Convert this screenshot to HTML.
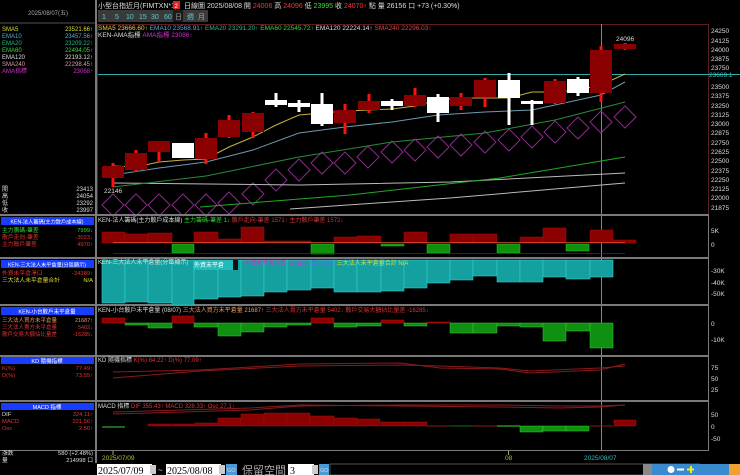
<!DOCTYPE html>
<html><head><meta charset="utf-8"><style>
html,body{margin:0;padding:0;background:#000;width:740px;height:475px;overflow:hidden}
svg{display:block;font-family:"Liberation Sans","Noto Sans CJK TC",sans-serif;font-size:7px}
</style></head><body>
<svg width="740" height="475" viewBox="0 0 740 475" xmlns="http://www.w3.org/2000/svg">
<rect width="740" height="475" fill="#000"/>
<rect x="95" y="0" width="2" height="463" fill="#7a7a7a"/>
<text x="48" y="15" fill="#aaa" text-anchor="middle" font-size="6">2025/08/07(五)</text>
<line x1="0" y1="23" x2="95" y2="23" stroke="#555"/>
<text x="98" y="8" fill="#ddd" font-size="7">小型台指近月(FIMTXN*1)</text>
<rect x="173" y="1" width="7" height="8" fill="#d22"/><text x="174.5" y="8" fill="#fff" font-size="6">2</text>
<text x="184" y="8" fill="#ddd" font-size="7">日線圖  2025/08/08  開 <tspan fill="#f33">24006</tspan> 高 <tspan fill="#f33">24096</tspan> 低 <tspan fill="#3d3">23995</tspan> 收 <tspan fill="#f33">24070</tspan><tspan fill="#f33">↑</tspan> 點  量 26156 口  +73 (+0.30%)</text>
<rect x="98" y="10" width="110" height="12" fill="#3a3a3a"/>
<g fill="#5cc" font-size="7">
<text x="102" y="19">1</text><text x="115" y="19">5</text><text x="126" y="19">10</text><text x="139" y="19">15</text><text x="151" y="19">30</text><text x="164" y="19">60</text>
</g>
<rect x="173" y="10" width="10" height="12" fill="#1c1c1c"/><text x="175" y="19" fill="#999">日</text>
<text x="187" y="19" fill="#5cc">週</text><text x="198" y="19" fill="#5cc">月</text>
<rect x="97.5" y="24.5" width="611" height="190" fill="none" stroke="#5a2020"/>
<text x="98" y="30" font-size="6.5"><tspan fill="#dd3">SMA5 23666.60↑</tspan>  <tspan fill="#5ad">  EMA10 23568.91↑</tspan>  <tspan fill="#2b8">  EMA20 23291.20↑</tspan>  <tspan fill="#3d3">  EMA60 22545.72↑</tspan>  <tspan fill="#ddd">  EMA120 22224.14↑</tspan>  <tspan fill="#d44">  SMA240 22296.03↑</tspan></text>
<text x="98" y="37" font-size="6.5" fill="#ddd">KEN-AMA指標  <tspan fill="#c3c">      AMA指標 23086↑</tspan></text>
<line x1="98" y1="74.5" x2="740" y2="74.5" stroke="#3aa" stroke-width="1"/>
<line x1="601.5" y1="24" x2="601.5" y2="450" stroke="#3aa"/>
<g fill="#ddd" font-size="6.5">
<text x="711" y="33">24250</text><text x="711" y="43">24125</text><text x="711" y="52">24000</text><text x="711" y="61">23875</text><text x="711" y="70">23750</text>
<text x="711" y="89">23500</text><text x="711" y="98">23375</text><text x="711" y="108">23250</text><text x="711" y="117">23125</text><text x="711" y="126">23000</text><text x="711" y="135">22875</text><text x="711" y="145">22750</text><text x="711" y="154">22625</text><text x="711" y="163">22500</text><text x="711" y="173">22375</text><text x="711" y="182">22250</text><text x="711" y="191">22125</text><text x="711" y="200">22000</text><text x="711" y="210">21875</text>
</g>
<text x="709" y="77" fill="#3cc" font-size="6.5">23669.1</text>
<g fill="none" stroke="#8a2a8a" stroke-width="1">
<path d="M102,205l11,-11l11,11l-11,11zM125,205l11,-11l11,11l-11,11zM148,205l11,-11l11,11l-11,11zM172,205l11,-11l11,11l-11,11zM195,205l11,-11l11,11l-11,11zM218,203l11,-11l11,11l-11,11zM242,194l11,-11l11,11l-11,11zM265,180l11,-11l11,11l-11,11zM288,170l11,-11l11,11l-11,11zM311,163l11,-11l11,11l-11,11zM334,163l11,-11l11,11l-11,11zM357,157l11,-11l11,11l-11,11zM381,152l11,-11l11,11l-11,11zM404,150l11,-11l11,11l-11,11zM427,147l11,-11l11,11l-11,11zM450,145l11,-11l11,11l-11,11zM474,142l11,-11l11,11l-11,11zM498,140l11,-11l11,11l-11,11zM521,137l11,-11l11,11l-11,11zM544,132l11,-11l11,11l-11,11zM567,128l11,-11l11,11l-11,11zM590,122l11,-11l11,11l-11,11zM614,117l11,-11l11,11l-11,11z"/>
</g>
<g fill="none" stroke-width="1">
<polyline stroke="#bbb" points="113,183 300,185 450,182 625,173"/>
<polyline stroke="#bbb" points="290,209 450,198 625,183"/>
<polyline stroke="#2a2" points="200,207 350,195 500,178 625,157"/>
<polyline stroke="#2a8a3a" points="113,187 206,176 299,157 392,142 485,133 555,120 625,102"/>
<polyline stroke="#6a9ab0" points="113,175 159,168 206,162 253,150 299,133 345,127 392,122 438,115 485,112 532,110 578,100 601,95 625,82"/>
<polyline stroke="#c8b040" points="113,166 136,167 159,162 183,160 206,159 229,147 253,137 276,125 299,115 322,113 345,111 369,110 392,109 415,106 438,100 461,98 485,98 509,98 532,92 555,92 578,90 601,85 625,74"/>
</g>
<g stroke-width="3">
<g stroke="#f11">
<line x1="113" y1="163" x2="113" y2="187"/><line x1="136" y1="150" x2="136" y2="172"/><line x1="159" y1="141" x2="159" y2="162"/><line x1="206" y1="133" x2="206" y2="164"/><line x1="229" y1="115" x2="229" y2="138"/><line x1="253" y1="112" x2="253" y2="138"/><line x1="345" y1="104" x2="345" y2="134"/><line x1="369" y1="94" x2="369" y2="113"/><line x1="415" y1="88" x2="415" y2="107"/><line x1="461" y1="93" x2="461" y2="110"/><line x1="485" y1="78" x2="485" y2="107"/><line x1="555" y1="79" x2="555" y2="104"/><line x1="601" y1="46" x2="601" y2="102"/><line x1="625" y1="43" x2="625" y2="50"/>
</g>
<g stroke="#fff">
<line x1="183" y1="143" x2="183" y2="158"/><line x1="276" y1="93" x2="276" y2="107"/><line x1="299" y1="100" x2="299" y2="112"/><line x1="322" y1="93" x2="322" y2="126"/><line x1="392" y1="99" x2="392" y2="110"/><line x1="438" y1="94" x2="438" y2="122"/><line x1="509" y1="73" x2="509" y2="125"/><line x1="532" y1="100" x2="532" y2="125"/><line x1="578" y1="77" x2="578" y2="96"/>
</g>
</g>
<g fill="#8b0000">
<rect x="102" y="166" width="22" height="12"/><rect x="125" y="153" width="22" height="17"/><rect x="148" y="141" width="22" height="11"/><rect x="195" y="138" width="22" height="21"/><rect x="218" y="120" width="22" height="17"/><rect x="242" y="113" width="22" height="19"/><rect x="334" y="110" width="22" height="13"/><rect x="358" y="101" width="22" height="9"/><rect x="404" y="95" width="22" height="11"/><rect x="450" y="97" width="22" height="9"/><rect x="474" y="80" width="22" height="17"/><rect x="544" y="81" width="22" height="22"/><rect x="590" y="50" width="22" height="43"/><rect x="614" y="44" width="22" height="5"/>
</g>
<g fill="#fff">
<rect x="172" y="143" width="22" height="15"/><rect x="265" y="100" width="22" height="5"/><rect x="288" y="103" width="22" height="4"/><rect x="311" y="104" width="22" height="20"/><rect x="381" y="101" width="22" height="5"/><rect x="427" y="97" width="22" height="16"/><rect x="498" y="80" width="22" height="18"/><rect x="521" y="101" width="22" height="3"/><rect x="567" y="79" width="22" height="14"/>
</g>
<text x="104" y="193" fill="#ddd" font-size="6.5">22146</text>
<text x="616" y="41" fill="#ddd" font-size="6.5">24096</text>

<g font-size="6">
<text x="2" y="31" fill="#dd3">SMA5</text><text x="93" y="31" fill="#dd3" text-anchor="end">23521.66↑</text>
<text x="2" y="38" fill="#5ad">EMA10</text><text x="93" y="38" fill="#5ad" text-anchor="end">23457.56↑</text>
<text x="2" y="45" fill="#2b8">EMA20</text><text x="93" y="45" fill="#2b8" text-anchor="end">23209.22↑</text>
<text x="2" y="52" fill="#3d3">EMA60</text><text x="93" y="52" fill="#3d3" text-anchor="end">22494.05↑</text>
<text x="2" y="59" fill="#ddd">EMA120</text><text x="93" y="59" fill="#ddd" text-anchor="end">22193.12↑</text>
<text x="2" y="66" fill="#d9a">SMA240</text><text x="93" y="66" fill="#d9a" text-anchor="end">22298.45↑</text>
<text x="2" y="73" fill="#c3c">AMA指標</text><text x="93" y="73" fill="#c3c" text-anchor="end">23068↑</text>
<g fill="#ddd"><text x="2" y="191">開</text><text x="93" y="191" text-anchor="end">23413</text><text x="2" y="198">高</text><text x="93" y="198" text-anchor="end">24054</text><text x="2" y="205">低</text><text x="93" y="205" text-anchor="end">23292</text><text x="2" y="212">收</text><text x="93" y="212" text-anchor="end">23997</text></g>
</g>

<g fill="#7a7a7a">
<rect x="0" y="214" width="709" height="2"/>
<rect x="0" y="257" width="709" height="2"/>
<rect x="0" y="304" width="709" height="2"/>
<rect x="0" y="355" width="709" height="2"/>
<rect x="0" y="400" width="709" height="2"/>
<rect x="0" y="450" width="709" height="1"/>
</g>
<rect x="708" y="214" width="1" height="237" fill="#7a7a7a"/>

<rect x="1" y="217" width="93" height="8" fill="#1a3cff"/>
<text x="47" y="223.5" fill="#fff" font-size="5.2" text-anchor="middle">KEN-法人籌碼(主力散戶成本線)</text>
<g font-size="5.8"><text x="2" y="232" fill="#3d3">主力籌碼-筆差</text><text x="93" y="232" fill="#3d3" text-anchor="end">7999↓</text>
<text x="2" y="239" fill="#d33">散戶走向-筆差</text><text x="93" y="239" fill="#d33" text-anchor="end">-3023↓</text>
<text x="2" y="246" fill="#d33">主力散戶筆差</text><text x="93" y="246" fill="#d33" text-anchor="end">4976↑</text></g>
<text x="98" y="222" fill="#ddd" font-size="6">KEN-法人籌碼(主力散戶成本線)   <tspan fill="#3d3">  主力籌碼-筆差 1↓</tspan>   <tspan fill="#d33">  散戶走向-筆差 1571↑</tspan>   <tspan fill="#d33">  主力散戶筆差 1572↓</tspan></text>
<g fill="#8b0000" stroke="#a01010" stroke-width=".5">
<rect x="102" y="232" width="23" height="11"/><rect x="125" y="234" width="23" height="9"/><rect x="148" y="233" width="24" height="10"/><rect x="194" y="232" width="24" height="11"/><rect x="218" y="239" width="23" height="4"/><rect x="241" y="227" width="23" height="16"/><rect x="264" y="241" width="23" height="2"/><rect x="287" y="241" width="24" height="2"/><rect x="334" y="237" width="23" height="6"/><rect x="357" y="236" width="24" height="7"/><rect x="404" y="232" width="23" height="11"/><rect x="450" y="234" width="23" height="9"/><rect x="473" y="234" width="24" height="9"/><rect x="520" y="237" width="23" height="6"/><rect x="543" y="228" width="23" height="15"/><rect x="590" y="230" width="23" height="13"/><rect x="613" y="240" width="23" height="3"/>
</g>
<g fill="#109010" stroke="#2c2" stroke-width=".5">
<rect x="172" y="244" width="22" height="9"/><rect x="311" y="244" width="23" height="10"/><rect x="381" y="244" width="23" height="2"/><rect x="427" y="244" width="23" height="9"/><rect x="497" y="244" width="23" height="9"/><rect x="566" y="244" width="23" height="7"/>
</g>
<line x1="113" y1="242.5" x2="625" y2="242.5" stroke="#e05030" stroke-width=".8"/>
<line x1="113" y1="253.5" x2="625" y2="253.5" stroke="#6a1a30" stroke-width=".8"/>
<text x="711" y="233" fill="#ddd" font-size="6.5">5K</text><text x="711" y="247" fill="#ddd" font-size="6.5">0</text>

<rect x="1" y="260" width="93" height="8" fill="#1a3cff"/>
<text x="47" y="266.5" fill="#fff" font-size="5.2" text-anchor="middle">KEN-三大法人未平倉量(分區顯示)</text>
<g font-size="5.8"><text x="2" y="275" fill="#d33">外資未平倉淨口</text><text x="93" y="275" fill="#d33" text-anchor="end">-34389↑</text>
<text x="2" y="282" fill="#dd3">三大法人未平倉量合計</text><text x="93" y="282" fill="#dd3" text-anchor="end">N/A</text></g>
<g fill="#15a0a0" stroke="#3cc" stroke-width=".6">
<rect x="102" y="260" width="23" height="43"/><rect x="125" y="260" width="23" height="42"/><rect x="148" y="260" width="24" height="43"/><rect x="172" y="260" width="22" height="45"/><rect x="194" y="260" width="24" height="39"/><rect x="218" y="260" width="23" height="37"/><rect x="241" y="260" width="23" height="36"/><rect x="264" y="260" width="23" height="32"/><rect x="287" y="260" width="24" height="30"/><rect x="311" y="260" width="23" height="28"/><rect x="334" y="260" width="23" height="32"/><rect x="357" y="260" width="24" height="32"/><rect x="381" y="260" width="23" height="31"/><rect x="404" y="260" width="23" height="28"/><rect x="427" y="260" width="23" height="23"/><rect x="450" y="260" width="23" height="20"/><rect x="473" y="260" width="24" height="16"/><rect x="497" y="260" width="23" height="22"/><rect x="520" y="260" width="23" height="22"/><rect x="543" y="260" width="23" height="17"/><rect x="566" y="260" width="24" height="19"/><rect x="590" y="260" width="23" height="17"/>
</g>
<rect x="193" y="260" width="40" height="10" fill="#2bb"/><text x="194" y="267" fill="#fff" font-size="6">外資未平倉</text>
<rect x="233" y="260" width="5" height="10" fill="#111"/>
<text x="98" y="264" fill="#ddd" font-size="6">KEN-三大法人未平倉量(分區顯示)</text>
<text x="244" y="265" fill="#c3c" font-size="6">外資未平倉淨口 -34389↑ <tspan fill="#66f">三大法人</tspan>    <tspan fill="#dd3">   三大法人未平倉量合計 N/A</tspan></text>
<text x="711" y="273" fill="#ddd" font-size="6.5">-30K</text><text x="711" y="285" fill="#ddd" font-size="6.5">-40K</text><text x="711" y="296" fill="#ddd" font-size="6.5">-50K</text>

<rect x="1" y="307" width="93" height="8" fill="#1a3cff"/>
<text x="47" y="313.5" fill="#fff" font-size="5.5" text-anchor="middle">KEN-小台散戶未平倉量</text>
<g font-size="5.5"><text x="2" y="322" fill="#e96">三大法人買方未平倉量</text><text x="93" y="322" fill="#e96" text-anchor="end">21687↑</text>
<text x="2" y="329" fill="#d33">三大法人賣方未平倉量</text><text x="93" y="329" fill="#d33" text-anchor="end">5402↓</text>
<text x="2" y="336" fill="#d33">散戶交易大額佔比量差</text><text x="93" y="336" fill="#d33" text-anchor="end">-16285↓</text></g>
<text x="98" y="312" fill="#ddd" font-size="6">KEN-小台散戶未平倉量   (08/07)   <tspan fill="#e96">三大法人買方未平倉量 21687↑</tspan>   <tspan fill="#d33">三大法人賣方未平倉量 5402↓</tspan>   <tspan fill="#d33">散戶交易大額佔比量差 -16285↓</tspan></text>
<g fill="#8b0000" stroke="#c01010" stroke-width=".5">
<rect x="102" y="318" width="23" height="5"/><rect x="172" y="316" width="22" height="7"/><rect x="311" y="318" width="23" height="5"/><rect x="381" y="320" width="23" height="3"/><rect x="427" y="322" width="23" height="1"/>
</g>
<g fill="#109010" stroke="#3c3" stroke-width=".5">
<rect x="125" y="323" width="23" height="2"/><rect x="148" y="323" width="24" height="5"/><rect x="194" y="323" width="24" height="4"/><rect x="218" y="323" width="23" height="13"/><rect x="241" y="323" width="23" height="9"/><rect x="264" y="323" width="23" height="4"/><rect x="287" y="323" width="24" height="2"/><rect x="334" y="323" width="23" height="4"/><rect x="357" y="323" width="24" height="3"/><rect x="404" y="323" width="23" height="3"/><rect x="450" y="323" width="23" height="10"/><rect x="473" y="323" width="24" height="10"/><rect x="497" y="323" width="23" height="3"/><rect x="520" y="323" width="23" height="4"/><rect x="543" y="323" width="23" height="18"/><rect x="566" y="323" width="24" height="8"/><rect x="590" y="323" width="23" height="25"/>
</g>
<text x="711" y="326" fill="#ddd" font-size="6.5">0</text><text x="711" y="342" fill="#ddd" font-size="6.5">-10K</text>

<rect x="1" y="357" width="93" height="7" fill="#1a3cff"/>
<text x="47" y="363" fill="#fff" font-size="5.5" text-anchor="middle">KD 隨機指標</text>
<g font-size="5.8" fill="#d33"><text x="2" y="370">K(%)</text><text x="93" y="370" text-anchor="end">77.49↑</text><text x="2" y="377">D(%)</text><text x="93" y="377" text-anchor="end">73.55↑</text></g>
<text x="98" y="362" fill="#ddd" font-size="6">KD 隨機指標    <tspan fill="#d33">K(%) 84.22↑</tspan>    <tspan fill="#d33">D(%) 77.09↑</tspan></text>
<polyline fill="none" stroke="#8b1a1a" stroke-width="1" points="113,372 200,370 300,364 400,363 440,368 500,369 530,373 600,370 625,364"/>
<polyline fill="none" stroke="#8b1a1a" stroke-width="1" points="113,378 200,371 300,366 400,365 440,366 500,368 530,371 600,368 625,366"/>
<text x="711" y="370" fill="#ddd" font-size="6.5">75</text><text x="711" y="381" fill="#ddd" font-size="6.5">50</text><text x="711" y="392" fill="#ddd" font-size="6.5">25</text>

<rect x="1" y="403" width="93" height="7" fill="#1a3cff"/>
<text x="47" y="409" fill="#fff" font-size="5.5" text-anchor="middle">MACD 指標</text>
<g font-size="5.8"><text x="2" y="416" fill="#ddd">DIF</text><text x="93" y="416" fill="#d33" text-anchor="end">324.11↑</text><text x="2" y="423" fill="#d33">MACD</text><text x="93" y="423" fill="#d33" text-anchor="end">321.56↑</text><text x="2" y="430" fill="#d33">Osc</text><text x="93" y="430" fill="#d33" text-anchor="end">2.56↑</text></g>
<text x="98" y="408" fill="#ddd" font-size="6">MACD 指標    <tspan fill="#d33">DIF 355.43↑</tspan>    <tspan fill="#d33">MACD 328.33↑</tspan>    <tspan fill="#d33">Osc 27.1↑</tspan></text>
<polyline fill="none" stroke="#8b1a1a" points="113,412 250,408 300,405 400,406 500,407 560,408 600,407 625,405"/>
<polyline fill="none" stroke="#8b1a1a" points="113,414 250,410 300,406 400,405 500,405 560,406 600,406 625,405"/>
<line x1="102" y1="427" x2="125" y2="427" stroke="#3c3"/>
<g fill="#8b0000" stroke="#a01010" stroke-width=".5">
<rect x="148" y="424" width="23" height="2"/><rect x="172" y="424" width="23" height="2"/><rect x="195" y="423" width="23" height="3"/><rect x="218" y="418" width="23" height="8"/><rect x="241" y="414" width="23" height="12"/><rect x="264" y="413" width="23" height="13"/><rect x="287" y="413" width="23" height="13"/><rect x="310" y="416" width="24" height="10"/><rect x="334" y="418" width="23" height="8"/><rect x="357" y="419" width="23" height="7"/><rect x="381" y="422" width="23" height="4"/><rect x="404" y="422" width="23" height="4"/><rect x="614" y="420" width="22" height="6"/>
</g>
<g stroke-width="1"><line x1="427" y1="426" x2="450" y2="426" stroke="#8b1a1a"/><line x1="450" y1="426" x2="473" y2="426" stroke="#1a6a1a"/><line x1="473" y1="426" x2="497" y2="426" stroke="#8b1a1a"/><line x1="497" y1="426" x2="520" y2="426" stroke="#3d3"/><line x1="590" y1="426" x2="613" y2="426" stroke="#8b1a1a"/></g>
<g fill="#109010" stroke="#3c3" stroke-width=".5"><rect x="520" y="426" width="23" height="6"/><rect x="543" y="426" width="23" height="5"/><rect x="566" y="426" width="23" height="5"/></g>
<text x="711" y="417" fill="#ddd" font-size="6.5">50</text><text x="711" y="429" fill="#ddd" font-size="6.5">0</text><text x="711" y="441" fill="#ddd" font-size="6.5">-50</text>

<line x1="113" y1="451" x2="113" y2="455" stroke="#aa3"/>
<text x="102" y="460" fill="#bb3" font-size="6.5">2025/07/09</text>
<line x1="508.5" y1="451" x2="508.5" y2="455" stroke="#aa3"/>
<text x="505" y="460" fill="#bb3" font-size="6.5">08</text>
<text x="584" y="460" fill="#3bb" font-size="6.5">2025/08/07</text>
<g fill="#ddd" font-size="5.8"><text x="2" y="455">漲跌</text><text x="93" y="455" text-anchor="end">580 (+2.48%)</text><text x="2" y="462">量</text><text x="93" y="462" text-anchor="end">214998 口</text></g>

<rect x="97" y="464" width="55" height="11" fill="#fff"/><text x="98" y="474" fill="#000" font-size="10" font-family="Liberation Serif, serif">2025/07/09</text>
<rect x="150" y="465" width="6" height="9" fill="#ccc"/>
<text x="158" y="473" fill="#ddd" font-size="8">~</text>
<rect x="166" y="464" width="55" height="11" fill="#fff"/><text x="167" y="474" fill="#000" font-size="10" font-family="Liberation Serif, serif">2025/08/08</text>
<rect x="219" y="465" width="6" height="9" fill="#ccc"/>
<rect x="226" y="464" width="11" height="11" fill="#4a9ad8"/><text x="227" y="472" fill="#cde" font-size="5.5">GO</text>
<text x="242" y="474" fill="#aaa" font-size="11">保留空間</text>
<rect x="288" y="464" width="26" height="11" fill="#fff"/><text x="290" y="474" fill="#000" font-size="10" font-family="Liberation Serif, serif">3</text>
<rect x="312" y="465" width="6" height="9" fill="#ccc"/>
<rect x="319" y="464" width="10" height="11" fill="#4a9ad8"/><text x="320" y="472" fill="#cde" font-size="5.5">GO</text>
<rect x="330" y="464" width="370" height="11" fill="none" stroke="#666" stroke-width=".8"/>
<rect x="643" y="464" width="97" height="11" fill="#3a8ad0"/>
<rect x="643" y="464" width="9" height="11" fill="#888"/>
<g fill="#fff"><circle cx="671" cy="469.5" r="3.5" fill="#fff"/><rect x="677" y="468.5" width="7" height="2"/><rect x="687" y="468.5" width="7" height="2" fill="#ee2"/><rect x="690" y="466" width="2" height="7" fill="#ee2"/></g>
<rect x="729" y="464" width="11" height="11" fill="#f0a030"/>
</svg>
</body></html>
